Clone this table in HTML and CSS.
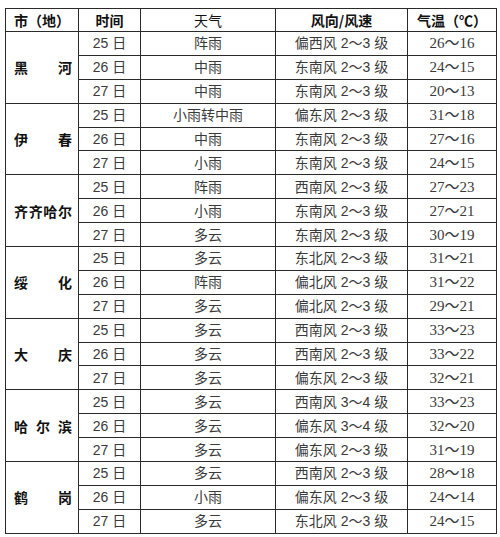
FILE: index.html
```html
<!DOCTYPE html>
<html lang="zh-CN">
<head>
<meta charset="utf-8">
<link rel="stylesheet" href="styles.css">
</head>
<body>
<table class="wx">
<colgroup>
<col class="c-city"><col class="c-date"><col class="c-wx"><col class="c-wind"><col class="c-temp">
</colgroup>
<thead>
<tr class="head"><th>市（地）</th><th>时间</th><th class="thin">天气</th><th>风向/风速</th><th>气温（℃）</th></tr>
</thead>
<tbody>
<tr><td class="city" rowspan="3"><span class="spread"><span>黑</span><span>河</span></span></td><td>25 日</td><td>阵雨</td><td>偏西风 2～3 级</td><td class="temp">26～16</td></tr>
<tr><td>26 日</td><td>中雨</td><td>东南风 2～3 级</td><td class="temp">24～15</td></tr>
<tr><td>27 日</td><td>中雨</td><td>东南风 2～3 级</td><td class="temp">20～13</td></tr>

<tr><td class="city" rowspan="3"><span class="spread"><span>伊</span><span>春</span></span></td><td>25 日</td><td>小雨转中雨</td><td>偏东风 2～3 级</td><td class="temp">31～18</td></tr>
<tr><td>26 日</td><td>中雨</td><td>东南风 2～3 级</td><td class="temp">27～16</td></tr>
<tr><td>27 日</td><td>小雨</td><td>东南风 2～3 级</td><td class="temp">24～15</td></tr>

<tr><td class="city" rowspan="3"><span class="spread"><span>齐</span><span>齐</span><span>哈</span><span>尔</span></span></td><td>25 日</td><td>阵雨</td><td>西南风 2～3 级</td><td class="temp">27～23</td></tr>
<tr><td>26 日</td><td>小雨</td><td>东南风 2～3 级</td><td class="temp">27～21</td></tr>
<tr><td>27 日</td><td>多云</td><td>东南风 2～3 级</td><td class="temp">30～19</td></tr>

<tr><td class="city" rowspan="3"><span class="spread"><span>绥</span><span>化</span></span></td><td>25 日</td><td>多云</td><td>东北风 2～3 级</td><td class="temp">31～21</td></tr>
<tr><td>26 日</td><td>阵雨</td><td>偏北风 2～3 级</td><td class="temp">31～22</td></tr>
<tr><td>27 日</td><td>多云</td><td>偏北风 2～3 级</td><td class="temp">29～21</td></tr>

<tr><td class="city" rowspan="3"><span class="spread"><span>大</span><span>庆</span></span></td><td>25 日</td><td>多云</td><td>西南风 2～3 级</td><td class="temp">33～23</td></tr>
<tr><td>26 日</td><td>多云</td><td>西南风 2～3 级</td><td class="temp">33～22</td></tr>
<tr><td>27 日</td><td>多云</td><td>偏东风 2～3 级</td><td class="temp">32～21</td></tr>

<tr><td class="city" rowspan="3"><span class="spread"><span>哈</span><span>尔</span><span>滨</span></span></td><td>25 日</td><td>多云</td><td>西南风 3～4 级</td><td class="temp">33～23</td></tr>
<tr><td>26 日</td><td>多云</td><td>偏东风 3～4 级</td><td class="temp">32～20</td></tr>
<tr><td>27 日</td><td>多云</td><td>偏东风 2～3 级</td><td class="temp">31～19</td></tr>

<tr><td class="city" rowspan="3"><span class="spread"><span>鹤</span><span>岗</span></span></td><td>25 日</td><td>多云</td><td>西南风 2～3 级</td><td class="temp">28～18</td></tr>
<tr><td>26 日</td><td>小雨</td><td>偏东风 2～3 级</td><td class="temp">24～14</td></tr>
<tr><td>27 日</td><td>多云</td><td>东北风 2～3 级</td><td class="temp">24～15</td></tr>
</tbody>
</table>
</body>
</html>
```

FILE: styles.css
```css
html, body {
  margin: 0;
  padding: 0;
  background: #fff;
}
body {
  padding: 8px 0 0 5px;
  font-family: "Liberation Sans", "Noto Sans CJK SC", sans-serif;
  font-size: 14px;
  color: #3a3a3a;
}
.wx {
  border-collapse: collapse;
  table-layout: fixed;
  width: 491px;
}
.c-city { width: 73px; }
.c-date { width: 62px; }
.c-wx { width: 135px; }
.c-wind { width: 132px; }
.c-temp { width: 89px; }

.wx th, .wx td {
  border: 1px solid #2a2a2a;
  padding: 0;
  text-align: center;
  vertical-align: middle;
  line-height: 16px;
  white-space: nowrap;
}
.wx tbody tr { height: 23.9px; }
.wx tr.head { height: 23px; }
.wx th {
  color: #111;
  font-weight: bold;
  font-family: "Noto Sans CJK SC", sans-serif;
}
.wx th.thin { font-weight: normal; }
.wx td.temp {
  font-family: "Liberation Serif", "Noto Sans CJK SC", serif;
  font-size: 15px;
}
.wx td.city {
  color: #111;
  font-weight: bold;
  font-family: "Noto Sans CJK SC", sans-serif;
  padding: 0 6px 0 8px;
}
.spread {
  display: flex;
  justify-content: space-between;
}
```
